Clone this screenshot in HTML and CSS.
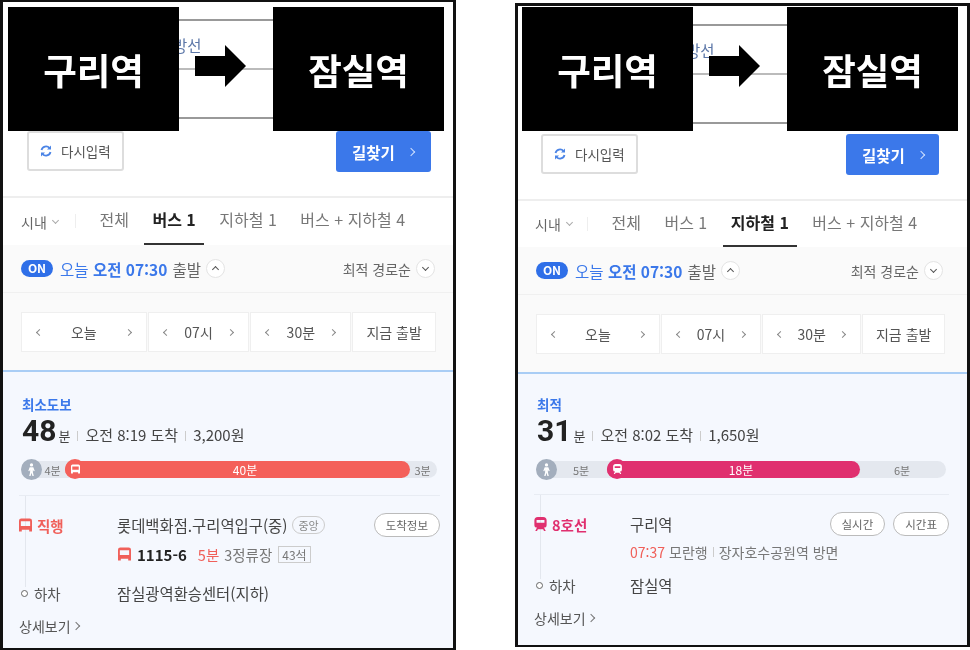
FILE: index.html
```html
<!DOCTYPE html>
<html lang="ko">
<head>
  <meta charset="UTF-8" />
  <title>구리역 잠실역 길찾기</title>
  <link rel="stylesheet" href="styles.css">
</head>
<body>
  <svg class="defs" width="0" height="0">
    <symbol id="bus" viewBox="0 0 14 14">
      <path fill="currentColor" fill-rule="evenodd" d="M2.5 0h9A2.5 2.5 0 0 1 14 2.500V14h-3v-2H3v2H0V2.500A2.500 2.500 0 0 1 2.500 0zM2 3v5h10V3z"/>
    </symbol>
    <symbol id="subway" viewBox="0 0 14 16">
      <path fill="currentColor" fill-rule="evenodd" d="M4 0h6a4 4 0 0 1 4 4v5a3 3 0 0 1-3 3l2 4h-2l-1-2H4l-1 2H1l2-4a3 3 0 0 1-3-3V4a4 4 0 0 1 4-4zM2.500 3.500v3h9v-3z"/>
    </symbol>
    <symbol id="walk" viewBox="0 0 12 14">
      <circle cx="6" cy="2" r="1.800" fill="#fff"/>
      <path fill="#fff" d="M4 4.500h4l1.500 4-1.200.4L7.500 7v3l1 4H7l-1-3.500L5 14H3.500l1-4V7l-.8 1.900-1.200-.4z"/>
    </symbol>
    <symbol id="refresh" viewBox="0 0 12 12">
      <path fill="none" stroke="currentColor" stroke-width="1.800" d="M1.500 5A4.600 4.600 0 0 1 9.500 3M10.500 7A4.600 4.600 0 0 1 2.500 9"/>
      <path fill="currentColor" d="M11 .5v4H7zM1 11.500v-4h4z"/>
    </symbol>
  </svg>

  <div class="panel panel-a">
    <div class="search">
      <div class="fields">
        <div class="field"><span class="field-text">방선</span></div>
        <div class="field"></div>
      </div>
      <div class="actions">
        <button class="reset"><svg class="reset-icon"><use href="#refresh"/></svg>다시입력</button>
        <button class="go">길찾기<i class="chev chev-right"></i></button>
      </div>
    </div>
    <div class="tabs">
      <span class="area">시내<i class="chev chev-down"></i></span>
      <span class="tab">전체</span>
      <span class="tab active">버스 1</span>
      <span class="tab">지하철 1</span>
      <span class="tab">버스 + 지하철 4</span>
    </div>
    <div class="options">
      <div class="depart">
        <span class="on">ON</span>
        <span class="when">오늘 <b>오전 07:30</b></span> 출발
        <span class="round"><i class="chev chev-up"></i></span>
        <span class="sort">최적 경로순</span>
        <span class="round"><i class="chev chev-down"></i></span>
      </div>
      <div class="picker">
        <div class="cell"><i class="chev chev-left"></i>오늘<i class="chev chev-right"></i></div>
        <div class="cell"><i class="chev chev-left"></i>07시<i class="chev chev-right"></i></div>
        <div class="cell"><i class="chev chev-left"></i>30분<i class="chev chev-right"></i></div>
        <div class="cell now">지금 출발</div>
      </div>
    </div>
    <div class="result">
      <div class="badge">최소도보</div>
      <div class="summary"><b>48</b><span class="unit">분</span><span class="sep"></span>오전 8:19 도착<span class="sep"></span>3,200원</div>
      <div class="bar">
        <span class="walk"><svg class="walk-icon"><use href="#walk"/></svg></span>
        <span class="gap" style="width: 23px">4분</span>
        <span class="ride bus-ride" style="width: 345px"><span class="ride-icon"><svg><use href="#bus"/></svg></span>40분</span>
        <span class="gap" style="flex: 1">3분</span>
      </div>
      <div class="route">
        <div class="stop first">
          <div class="label bus-label"><svg class="mode"><use href="#bus"/></svg>직행</div>
          <div class="place">롯데백화점.구리역입구(중)<span class="central">중앙</span></div>
          <div class="pills"><span class="pill">도착정보</span></div>
        </div>
        <div class="detail">
          <svg class="mode bus-label"><use href="#bus"/></svg><b class="line-no">1115-6</b><span class="soon">5분</span><span class="count">3정류장</span><span class="seats">43석</span>
        </div>
        <div class="stop last">
          <div class="label"><i class="dot"></i>하차</div>
          <div class="place">잠실광역환승센터(지하)</div>
        </div>
      </div>
      <div class="more">상세보기<i class="chev chev-right"></i></div>
    </div>
    <div class="cover cover-from">구리역</div>
    <svg class="arrow" viewBox="0 0 51 42"><path d="M0 11h30V0l21 21-21 21V31H0z"/></svg>
    <div class="cover cover-to">잠실역</div>
  </div>

  <div class="panel panel-b">
    <div class="search">
      <div class="fields">
        <div class="field"><span class="field-text">방선</span></div>
        <div class="field"></div>
      </div>
      <div class="actions">
        <button class="reset"><svg class="reset-icon"><use href="#refresh"/></svg>다시입력</button>
        <button class="go">길찾기<i class="chev chev-right"></i></button>
      </div>
    </div>
    <div class="tabs">
      <span class="area">시내<i class="chev chev-down"></i></span>
      <span class="tab">전체</span>
      <span class="tab">버스 1</span>
      <span class="tab active">지하철 1</span>
      <span class="tab">버스 + 지하철 4</span>
    </div>
    <div class="options">
      <div class="depart">
        <span class="on">ON</span>
        <span class="when">오늘 <b>오전 07:30</b></span> 출발
        <span class="round"><i class="chev chev-up"></i></span>
        <span class="sort">최적 경로순</span>
        <span class="round"><i class="chev chev-down"></i></span>
      </div>
      <div class="picker">
        <div class="cell"><i class="chev chev-left"></i>오늘<i class="chev chev-right"></i></div>
        <div class="cell"><i class="chev chev-left"></i>07시<i class="chev chev-right"></i></div>
        <div class="cell"><i class="chev chev-left"></i>30분<i class="chev chev-right"></i></div>
        <div class="cell now">지금 출발</div>
      </div>
    </div>
    <div class="result">
      <div class="badge">최적</div>
      <div class="summary"><b>31</b><span class="unit">분</span><span class="sep"></span>오전 8:02 도착<span class="sep"></span>1,650원</div>
      <div class="bar">
        <span class="walk"><svg class="walk-icon"><use href="#walk"/></svg></span>
        <span class="gap" style="width: 50px">5분</span>
        <span class="ride subway-ride" style="width: 253px"><span class="ride-icon"><svg><use href="#subway"/></svg></span>18분</span>
        <span class="gap" style="flex: 1">6분</span>
      </div>
      <div class="route">
        <div class="stop first">
          <div class="label subway-label"><svg class="mode"><use href="#subway"/></svg>8호선</div>
          <div class="place">구리역</div>
          <div class="pills"><span class="pill">실시간</span><span class="pill">시간표</span></div>
        </div>
        <div class="detail train">
          <span class="soon">07:37</span><span class="count">모란행</span><span class="sep"></span><span class="count">장자호수공원역 방면</span>
        </div>
        <div class="stop last">
          <div class="label"><i class="dot"></i>하차</div>
          <div class="place">잠실역</div>
        </div>
      </div>
      <div class="more">상세보기<i class="chev chev-right"></i></div>
    </div>
    <div class="cover cover-from">구리역</div>
    <svg class="arrow" viewBox="0 0 51 42"><path d="M0 11h30V0l21 21-21 21V31H0z"/></svg>
    <div class="cover cover-to">잠실역</div>
  </div>
</body>
</html>
```

FILE: styles.css
```css
* {
  box-sizing: border-box;
}
body {
  margin: 0;
  background: #fff;
  width: 970px;
  height: 650px;
  overflow: hidden;
  display: flex;
  align-items: flex-start;
  font-family: "Noto Sans CJK KR", "Noto Sans", sans-serif;
  font-size: 14px;
  color: #444;
}
.defs {
  position: absolute;
}
/* the screenshot is a scaled up capture, so everything is a little soft */
.panel {
  position: relative;
  display: flex;
  flex-direction: column;
  flex: none;
  background: #fff;
  border: solid #111;
  border-width: 2px 3px;
  filter: blur(0.45px);
}
.panel-a {
  width: 456px;
  height: 650px;
}
.panel-b {
  width: 455px;
  height: 644px;
  margin: 3px 0 0 59px;
  border-top-width: 3px;
}

/* black boxes pasted over the search form */
.cover {
  position: absolute;
  top: 5px;
  width: 171px;
  height: 124px;
  background: #000;
  color: #fff;
  font-size: 36.500px;
  font-weight: 700;
  display: flex;
  justify-content: center;
  align-items: center;
}
.panel-a .cover-from { left: 5px; }
.panel-a .cover-to { left: 270px; }
.panel-b .cover { top: 1px; }
.panel-b .cover-from { left: 4px; }
.panel-b .cover-to { left: 269px; }
.arrow {
  position: absolute;
  width: 51px;
  height: 42px;
}
.panel-a .arrow { left: 192px; top: 43px; }
.panel-b .arrow { left: 191px; top: 39px; }

/* search form */
.search {
  flex: none;
  padding: 17px 24px 0;
  height: 194px;
}
.panel-b .search {
  padding-top: 18px;
  height: 193px;
}
.fields {
  border-top: 2px solid #999;
}
.field {
  height: 49px;
  border-bottom: 2px solid #bbb;
  display: flex;
  align-items: center;
  padding-left: 146px;
}
.panel-b .field {
  padding-left: 144px;
}
.field:last-child {
  border-bottom-color: #999;
}
.field-text {
  color: #5c77a8;
  font-size: 15.500px;
}
.actions {
  display: flex;
  justify-content: space-between;
  align-items: flex-start;
  margin: 12px -2px 0 0;
}
.panel-b .actions {
  margin: 10px 4px 0 -1px;
}
button {
  font: inherit;
  border-radius: 3px;
  display: flex;
  align-items: center;
}
.reset {
  width: 97px;
  height: 40px;
  background: #fff;
  color: #555;
  border: 2px solid #ddd;
  font-size: 13.500px;
  padding: 0 0 0 11px;
}
.reset-icon {
  width: 12px;
  height: 12px;
  margin-right: 9px;
  color: #4b84e6;
}
.go {
  width: 95px;
  height: 41px;
  background: #3b78ea;
  color: #fff;
  border: none;
  font-size: 15.500px;
  font-weight: 700;
  padding: 0 0 0 16px;
}
.panel-b .go {
  width: 93px;
}
.go .chev {
  margin-left: 13px;
  border-color: #cfe0ff;
}

/* small chevrons */
.chev {
  display: inline-block;
  width: 6px;
  height: 6px;
  border: solid #666;
  border-width: 1.5px 1.5px 0 0;
  flex: none;
}
.chev-right { transform: rotate(45deg); }
.chev-left { transform: rotate(-135deg); }
.chev-down { transform: rotate(135deg); }
.chev-up { transform: rotate(-45deg); }

/* tabs */
.tabs {
  flex: none;
  height: 49px;
  border-top: 2px solid #eee;
  display: flex;
  align-items: stretch;
  gap: 7.500px;
  padding-left: 18px;
  font-size: 16px;
  color: #777;
}
.panel-b .tabs {
  height: 48px;
  padding-left: 17px;
}
.area {
  width: 62px;
  margin-right: 1px;
  display: flex;
  align-items: center;
  font-size: 14px;
  color: #666;
  position: relative;
}
.panel-b .area {
  width: 60px;
}
.area::after {
  content: "";
  position: absolute;
  right: 7px;
  top: 16px;
  height: 14px;
  border-right: 1px solid #eee;
}
.area .chev {
  width: 5px;
  height: 5px;
  margin: -3px 0 0 6px;
  border-color: #aaa;
  border-width: 1px 1px 0 0;
}
.tab {
  padding: 0 8px 3px;
  display: flex;
  align-items: center;
  border-bottom: 2px solid transparent;
}
.tab.active {
  color: #222;
  font-weight: 700;
  border-bottom-color: #333;
}

/* departure options */
.options {
  flex: none;
  height: 127px;
  background: #fafafa;
  border-bottom: 2px solid #a9cdf5;
}
.depart {
  height: 48px;
  border-bottom: 1px solid #f0f0f0;
  display: flex;
  align-items: center;
  gap: 5px;
  padding: 0 18px;
  font-size: 15.500px;
  color: #666;
}
.panel-b .depart {
  padding-right: 24px;
}
.on {
  width: 32px;
  height: 17px;
  border-radius: 9px;
  background: #2f6fe8;
  color: #fff;
  font-size: 12px;
  font-weight: 700;
  line-height: 16px;
  text-align: center;
  margin-right: 2px;
}
.when {
  color: #3b78ea;
}
.when b {
  font-weight: 700;
}
.round {
  width: 19px;
  height: 19px;
  border-radius: 50%;
  background: #fff;
  border: 1px solid #e4e4e4;
  display: flex;
  justify-content: center;
  align-items: center;
}
.round .chev {
  width: 5px;
  height: 5px;
  border-color: #555;
}
.round .chev-up { margin-top: 2px; }
.round .chev-down { margin-top: -2px; }
.sort {
  margin-left: auto;
  font-size: 14px;
}
.picker {
  display: grid;
  grid-template-columns: 126fr 102fr 101fr 84fr;
  gap: 1px;
  margin: 19px 17px 0 18px;
  height: 40px;
}
.panel-b .picker {
  margin-right: 22px;
}
.cell {
  background: #fff;
  border: 1px solid #efefef;
  display: flex;
  justify-content: space-between;
  align-items: center;
  padding: 0 15px;
  font-size: 14px;
  color: #555;
}
.cell .chev {
  width: 5px;
  height: 5px;
  border-color: #888;
}
.cell.now {
  justify-content: center;
  padding: 0;
}

/* route result */
.result {
  flex: 1;
  background: #f5f8fe;
  padding: 23px 13px 0 16px;
}
.panel-b .result {
  padding: 21px 18px 0 16px;
}
.badge {
  padding-left: 3px;
  color: #3b78ea;
  font-size: 13.500px;
  font-weight: 700;
  line-height: 18px;
}
.summary {
  display: flex;
  align-items: baseline;
  padding-left: 3px;
  height: 34px;
  margin-top: 1px;
  font-size: 15px;
  color: #444;
}
.summary b {
  font-family: Roboto, sans-serif;
  font-size: 30px;
  line-height: 34px;
  color: #222;
}
.unit {
  margin-left: 2px;
  font-size: 13px;
}
.sep {
  display: inline-block;
  width: 1px;
  height: 10px;
  margin: 0 7px;
  background: #ccc;
}
.bar {
  display: flex;
  align-items: center;
  height: 17px;
  margin: 13px 3px 0 2px;
  border-radius: 9px;
  background: #e4e8ef;
  font-size: 11px;
  color: #777;
}
.walk {
  flex: none;
  width: 21px;
  height: 21px;
  border-radius: 50%;
  background: #a3aebd;
  display: flex;
  justify-content: center;
  align-items: center;
}
.walk-icon {
  width: 11px;
  height: 13px;
}
.gap {
  text-align: center;
  padding-right: 2px;
}
.ride {
  position: relative;
  flex: none;
  height: 17px;
  padding-left: 15px;
  border-radius: 9px;
  color: #fff;
  font-size: 12px;
  text-align: center;
  line-height: 17px;
}
.bus-ride { background: #f4605a; }
.subway-ride { background: #e0306f; }
.ride-icon {
  position: absolute;
  left: 0;
  top: -2px;
  width: 20px;
  height: 20px;
  border-radius: 50%;
  background: inherit;
  display: flex;
  justify-content: center;
  align-items: center;
}
.ride-icon svg {
  width: 9px;
  height: 10px;
  color: #fff;
}
.route {
  position: relative;
  margin-top: 17px;
  padding-top: 17px;
  border-top: 1px solid #e8ecf3;
}
.panel-b .route {
  margin-top: 16px;
}
/* line that joins the stops on the left */
.route::before {
  content: "";
  position: absolute;
  left: 6px;
  top: 0;
  bottom: 18px;
  border-left: 1px solid #e3e7ee;
}
.stop {
  position: relative;
  display: flex;
  align-items: center;
  height: 24px;
}
.label {
  width: 98px;
  display: flex;
  align-items: center;
  font-size: 14.500px;
  color: #555;
}
.panel-b .label {
  width: 96px;
}
.bus-label { color: #f0605a; }
.subway-label {
  color: #e0306f;
}
.first .label {
  font-weight: 700;
}
.mode {
  width: 13px;
  height: 14px;
  margin-right: 5px;
  flex: none;
}
.place {
  color: #444;
  font-size: 15.400px;
  display: flex;
  align-items: center;
}
.central {
  margin-left: 5px;
  padding: 0 5px;
  border: 1px solid #ccc;
  border-radius: 9px;
  font-size: 11px;
  line-height: 16px;
  color: #888;
}
.pills {
  margin-left: auto;
  display: flex;
  gap: 8px;
}
.pill {
  height: 24px;
  padding: 0 11px;
  border: 1px solid #bbb;
  border-radius: 12px;
  background: #fff;
  font-size: 11.500px;
  line-height: 22px;
  color: #666;
}
.detail {
  display: flex;
  align-items: center;
  height: 24px;
  margin: 5px 0 0 99px;
  font-size: 14.500px;
  color: #777;
}
.detail .mode {
  margin-right: 6px;
}
.detail.train {
  margin: 4px 0 0 96px;
  font-size: 14px;
}
.detail.train .soon {
  margin-right: 4px;
}
.detail.train .sep {
  margin: 0 5px;
}
.line-no {
  color: #222;
  font-size: 15px;
  margin-right: 11px;
}
.soon {
  color: #f0605a;
  margin-right: 5px;
}
.seats {
  margin-left: 6px;
  padding: 0 3px;
  border: 1px solid #ccc;
  font-size: 12px;
  line-height: 15px;
}
.last {
  margin-top: 15px;
}
.panel-b .last {
  margin-top: 9px;
}
.dot {
  width: 7px;
  height: 7px;
  margin: 0 6px 0 2px;
  border-radius: 50%;
  border: 1.500px solid #666;
  background: #fff;
}
.more {
  display: flex;
  align-items: center;
  margin-top: 11px;
  font-size: 14px;
  color: #555;
}
.more .chev {
  width: 6px;
  height: 6px;
  margin-left: 2px;
  border-color: #777;
  border-width: 1px 1px 0 0;
}
```
